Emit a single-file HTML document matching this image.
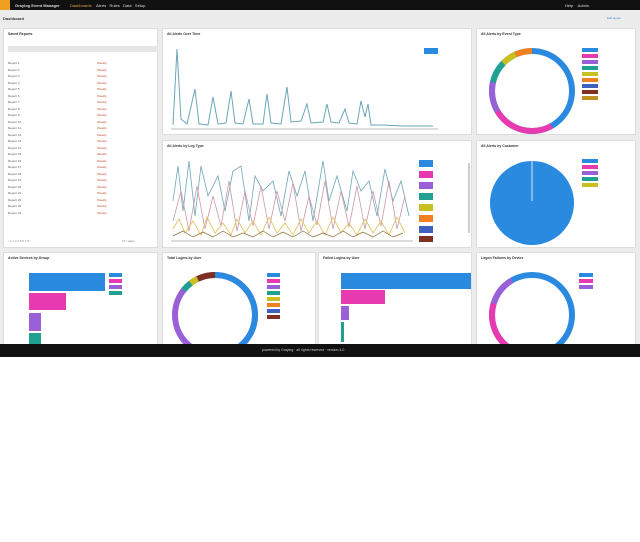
<!DOCTYPE html><html><head><style>
*{margin:0;padding:0;box-sizing:border-box}
body{width:640px;height:542px;background:#fff;font-family:"Liberation Sans",sans-serif;overflow:hidden;position:relative}
#app{position:absolute;left:0;top:0;width:640px;height:357px;background:#ececec;overflow:hidden}
.top{position:absolute;left:0;top:0;width:640px;height:10px;background:#111}
.p{position:absolute;background:#fff;border:1px solid #ddd}
.t{position:absolute;left:4px;top:3px;font-size:3.5px;font-weight:bold;color:#333;white-space:nowrap}
.bot{position:absolute;left:0;top:344px;width:640px;height:13px;background:#111}
.row{position:absolute;left:4px;font-size:3px;color:#555}
</style></head><body><div id="app">
<div class="top">
<div style="position:absolute;left:0;top:0;width:10px;height:10px;background:#f0a020"></div>
<div style="position:absolute;left:15px;top:3px;font-size:4px;color:#ddd;font-weight:bold">Graylog Event Manager</div>
<div style="position:absolute;left:70px;top:3px;font-size:4px;color:#e0a040">Dashboards</div>
<div style="position:absolute;left:96px;top:3px;font-size:4px;color:#ddd">Alerts&nbsp;&nbsp;&nbsp;Rules&nbsp;&nbsp;&nbsp;Data&nbsp;&nbsp;&nbsp;Setup</div>
<div style="position:absolute;left:565px;top:3px;font-size:4px;color:#ddd">Help&nbsp;&nbsp;&nbsp;&nbsp;Admin</div>
</div>
<div style="position:absolute;left:3px;top:16px;font-size:4px;font-weight:bold;color:#333">Dashboard</div>
<div style="position:absolute;left:607px;top:16px;font-size:3px;color:#48c">Edit layout</div>

<div class="p" style="left:3px;top:28px;width:155px;height:220px">
<div class="t">Saved Reports</div>
<div style="position:absolute;left:4px;top:17px;width:150px;height:6px;background:#e6e6e6"></div>
<svg style="position:absolute;left:0;top:0" width="155" height="220">
<g fill="#bbb"><script></script></g>
</svg>
<div id="rows"></div>
<div class="row" style="top:210px;color:#888">‹ 1 2 3 4 5 6 7 8 ›</div>
<div class="row" style="top:210px;left:118px;color:#888">10 / page</div>
</div>

<div class="p" style="left:162px;top:28px;width:310px;height:107px">
<div class="t">All Alerts Over Time</div>
<svg style="position:absolute;left:0;top:0" width="310" height="107">
<line x1="8" y1="100" x2="275" y2="100" stroke="#bbb" stroke-width="1"/>
<polyline fill="none" stroke="#6aa6b8" stroke-width="1" points="10,96 14,20 18,90 24,95 32,60 36,95 45,96 50,68 55,95 63,94 68,62 72,94 80,95 86,70 90,95 100,95 104,65 108,94 118,95 124,58 128,93 138,92 144,75 148,94 160,93 164,75 168,93 176,94 182,80 186,94 194,95 198,72 202,88 205,75 208,96 220,96 240,97 270,97"/>
<rect x="261" y="19" width="14" height="6" fill="#2a8ae0"/>
</svg></div>

<div class="p" style="left:162px;top:140px;width:310px;height:108px">
<div class="t">All Alerts by Log Type</div>
<svg style="position:absolute;left:0;top:0" width="310" height="108">
<line x1="8" y1="100" x2="250" y2="100" stroke="#bbb"/>
<polyline fill="none" stroke="#6aa6b8" stroke-width="0.8" points="10,60 15,25 20,70 26,20 32,75 38,25 45,55 55,35 62,70 70,30 78,25 86,80 92,35 100,50 110,40 118,75 126,30 134,55 142,30 150,80 160,20 166,60 174,35 184,70 190,30 198,50 206,40 214,75 222,28 230,60 238,40 246,75"/>
<polyline fill="none" stroke="#c9a" stroke-width="0.8" points="10,80 18,50 26,90 34,45 42,88 50,55 58,85 66,40 74,90 82,50 90,85 98,45 106,88 114,50 122,80 130,42 138,90 146,55 154,84 162,40 170,88 178,50 186,86 194,45 202,88 210,50 218,85 226,40 234,88 242,55"/>
<polyline fill="none" stroke="#e4c46a" stroke-width="0.9" points="10,88 16,78 22,92 30,80 38,94 44,76 52,92 60,82 68,94 74,78 82,92 90,80 98,94 106,76 114,92 122,82 130,94 138,78 146,92 154,80 162,94 170,76 178,92 186,82 194,94 202,78 210,92 218,80 226,94 234,76 242,92"/>
<polyline fill="none" stroke="#8a6a30" stroke-width="0.7" points="10,95 20,90 30,96 40,91 50,96 60,90 70,96 80,92 90,96 100,90 110,96 120,91 130,96 140,90 150,96 160,92 170,96 180,90 190,96 200,91 210,96 220,90 230,96 240,92"/>
<g>
<rect x="256" y="19" width="14" height="7" fill="#2a8ae0"/><rect x="256" y="30" width="14" height="7" fill="#e83ab0"/><rect x="256" y="41" width="14" height="7" fill="#9a60d8"/><rect x="256" y="52" width="14" height="7" fill="#20a090"/><rect x="256" y="63" width="14" height="7" fill="#c8c020"/><rect x="256" y="74" width="14" height="7" fill="#f08020"/><rect x="256" y="85" width="14" height="7" fill="#4060c0"/><rect x="256" y="95" width="14" height="6" fill="#803020"/>
</g>
<rect x="305" y="22" width="2" height="70" fill="#ccc"/>
</svg></div>

<div class="p" style="left:476px;top:28px;width:160px;height:107px">
<div class="t">All Alerts by Event Type</div>
<svg style="position:absolute;left:0;top:0" width="160" height="107">
<g fill="none" stroke-width="6" transform="rotate(-90 55 62)">
<circle cx="55" cy="62" r="40" stroke="#2a8ae0"/>
<circle cx="55" cy="62" r="40" stroke="#e83ab0" stroke-dasharray="0 105 62 200"/>
<circle cx="55" cy="62" r="40" stroke="#9a60d8" stroke-dasharray="0 167 30 200"/>
<circle cx="55" cy="62" r="40" stroke="#20a090" stroke-dasharray="0 197 22 200"/>
<circle cx="55" cy="62" r="40" stroke="#c8c020" stroke-dasharray="0 219 15 200"/>
<circle cx="55" cy="62" r="40" stroke="#f08020" stroke-dasharray="0 234 17 200"/>
</g>
<g>
<rect x="105" y="19" width="16" height="4" fill="#2a8ae0"/><rect x="105" y="25" width="16" height="4" fill="#e83ab0"/><rect x="105" y="31" width="16" height="4" fill="#9a60d8"/><rect x="105" y="37" width="16" height="4" fill="#20a090"/><rect x="105" y="43" width="16" height="4" fill="#c8c020"/><rect x="105" y="49" width="16" height="4" fill="#f08020"/><rect x="105" y="55" width="16" height="4" fill="#4060c0"/><rect x="105" y="61" width="16" height="4" fill="#803020"/><rect x="105" y="67" width="16" height="4" fill="#c09020"/>
</g></svg></div>

<div class="p" style="left:476px;top:140px;width:160px;height:108px">
<div class="t">All Alerts by Customer</div>
<svg style="position:absolute;left:0;top:0" width="160" height="108">
<circle cx="55" cy="62" r="42" fill="#2a8ae0"/><line x1="55" y1="20" x2="55" y2="60" stroke="#fff" stroke-width="0.8"/>
<rect x="105" y="18" width="16" height="4" fill="#2a8ae0"/><rect x="105" y="24" width="16" height="4" fill="#e83ab0"/><rect x="105" y="30" width="16" height="4" fill="#9a60d8"/><rect x="105" y="36" width="16" height="4" fill="#20a090"/><rect x="105" y="42" width="16" height="4" fill="#c8c020"/>
</svg></div>

<div class="p" style="left:3px;top:252px;width:155px;height:100px">
<div class="t">Active Devices by Group</div>
<svg style="position:absolute;left:0;top:0" width="155" height="100">
<rect x="25" y="20" width="76" height="18" fill="#2a8ae0"/><rect x="25" y="40" width="37" height="17" fill="#e83ab0"/><rect x="25" y="60" width="12" height="18" fill="#9a60d8"/><rect x="25" y="80" width="12" height="15" fill="#20a090"/>
<rect x="105" y="20" width="13" height="4" fill="#2a8ae0"/><rect x="105" y="26" width="13" height="4" fill="#e83ab0"/><rect x="105" y="32" width="13" height="4" fill="#9a60d8"/><rect x="105" y="38" width="13" height="4" fill="#20a090"/>
</svg></div>

<div class="p" style="left:162px;top:252px;width:154px;height:100px">
<div class="t">Total Logins by User</div>
<svg style="position:absolute;left:0;top:0" width="154" height="100">
<g fill="none" stroke-width="6" transform="rotate(-90 52 62)">
<circle cx="52" cy="62" r="40" stroke="#9a60d8"/>
<circle cx="52" cy="62" r="40" stroke="#2a8ae0" stroke-dasharray="120 200"/>
<circle cx="52" cy="62" r="40" stroke="#e83ab0" stroke-dasharray="0 120 12 200"/>
<circle cx="52" cy="62" r="40" stroke="#20a090" stroke-dasharray="0 215 10 200"/>
<circle cx="52" cy="62" r="40" stroke="#c8c020" stroke-dasharray="0 225 8 200"/>
<circle cx="52" cy="62" r="40" stroke="#803020" stroke-dasharray="0 233 18 200"/>
</g>
<rect x="104" y="20" width="13" height="4" fill="#2a8ae0"/><rect x="104" y="26" width="13" height="4" fill="#e83ab0"/><rect x="104" y="32" width="13" height="4" fill="#9a60d8"/><rect x="104" y="38" width="13" height="4" fill="#20a090"/><rect x="104" y="44" width="13" height="4" fill="#c8c020"/><rect x="104" y="50" width="13" height="4" fill="#f08020"/><rect x="104" y="56" width="13" height="4" fill="#4060c0"/><rect x="104" y="62" width="13" height="4" fill="#803020"/>
</svg></div>

<div class="p" style="left:318px;top:252px;width:154px;height:100px">
<div class="t">Failed Logins by User</div>
<svg style="position:absolute;left:0;top:0" width="154" height="100">
<rect x="22" y="20" width="130" height="16" fill="#2a8ae0"/><rect x="22" y="37" width="44" height="14" fill="#e83ab0"/><rect x="22" y="53" width="8" height="14" fill="#9a60d8"/><rect x="22" y="69" width="3" height="20" fill="#20a090"/>
</svg></div>

<div class="p" style="left:476px;top:252px;width:160px;height:100px">
<div class="t">Logon Failures by Device</div>
<svg style="position:absolute;left:0;top:0" width="160" height="100">
<g fill="none" stroke-width="6" transform="rotate(-90 55 62)">
<circle cx="55" cy="62" r="40" stroke="#2a8ae0"/>
<circle cx="55" cy="62" r="40" stroke="#e83ab0" stroke-dasharray="0 150 50 300"/>
<circle cx="55" cy="62" r="40" stroke="#9a60d8" stroke-dasharray="0 200 30 300"/>
</g>
<rect x="102" y="20" width="14" height="4" fill="#2a8ae0"/><rect x="102" y="26" width="14" height="4" fill="#e83ab0"/><rect x="102" y="32" width="14" height="4" fill="#9a60d8"/>
</svg></div>

<div class="bot"><div style="position:absolute;left:262px;top:4px;font-size:3.5px;color:#ccc;white-space:nowrap">powered by Graylog · all rights reserved · version 4.0</div></div>
</div>
<script>
var r=document.getElementById('rows'),h='';
for(var i=0;i<24;i++){var y=32+i*6.5;h+='<div class="row" style="top:'+y+'px">Report '+(i+1)+'</div><div class="row" style="top:'+y+'px;left:93px;color:#c0502a">Weekly</div>';}
r.innerHTML=h;
</script>
</body></html>
